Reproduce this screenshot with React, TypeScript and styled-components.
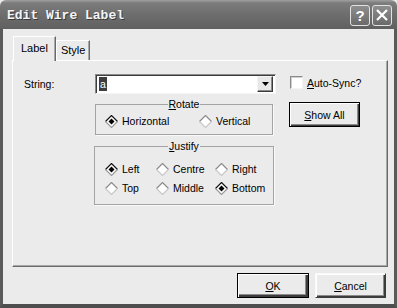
import { FC, ReactNode } from "react";
import styled, { createGlobalStyle } from "styled-components";

const GlobalStyle = createGlobalStyle`
  html, body {
    margin: 0;
    padding: 0;
    background: #ebebeb;
  }
  * {
    box-sizing: border-box;
  }
`;

type RadioProps = { checked?: boolean; label: ReactNode };

const Diamond: FC<{ checked?: boolean }> = ({ checked }) => (
  <svg width="13" height="13" viewBox="0 0 13 13">
    <polygon points="6.5,0.5 12.5,6.5 6.5,12.5 0.5,6.5" fill="#fff" />
    <polyline
      points="0.5,6.5 6.5,0.5 12.5,6.5"
      fill="none"
      stroke={checked ? "#111" : "#8a8a8a"}
      strokeWidth="1.2"
    />
    <polyline
      points="0.5,6.5 6.5,12.5 12.5,6.5"
      fill="none"
      stroke={checked ? "#9a9a9a" : "#c8c8c8"}
      strokeWidth="1.2"
    />
    {checked && <polygon points="6.5,3.5 9.5,6.5 6.5,9.5 3.5,6.5" fill="#000" />}
  </svg>
);

const Radio: FC<RadioProps> = ({ checked, label }) => (
  <StRadio>
    <Diamond checked={checked} />
    <span>{label}</span>
  </StRadio>
);

export default function App() {
  return (
    <>
      <GlobalStyle />
      <StWindow>
        <StTitleBar>
          <StTitle>Edit Wire Label</StTitle>
          <StCaptionButtons>
            <StCaptionButton>?</StCaptionButton>
            <StCaptionButton>
              <svg width="14" height="14" viewBox="0 0 14 14">
                <path d="M2 2 L12 12 M12 2 L2 12" stroke="#fff" strokeWidth="2.2" />
              </svg>
            </StCaptionButton>
          </StCaptionButtons>
        </StTitleBar>
        <StBody>
          <StTabs>
            <StTab $active>Label</StTab>
            <StTab>Style</StTab>
          </StTabs>
          <StPanel>
            <StFieldLabel>String:</StFieldLabel>
            <StCombo>
              <StComboText>
                <StSelection>a</StSelection>
              </StComboText>
              <StComboArrow>
                <svg width="7" height="4" viewBox="0 0 7 4">
                  <polygon points="0,0 7,0 3.5,4" fill="#000" />
                </svg>
              </StComboArrow>
            </StCombo>
            <StCheckRow>
              <StCheckBox />
              <span>
                <u>A</u>uto-Sync?
              </span>
            </StCheckRow>

            <StGroup $width={178} $top={4}>
              <StLegend>
                <u>R</u>otate
              </StLegend>
              <StRadioGrid $cols="94px 1fr" $pad="4px 0 6px 9px">
                <Radio checked label="Horizontal" />
                <Radio label="Vertical" />
              </StRadioGrid>
            </StGroup>
            <StSideButton>
              <StButton $focus>
                <u>S</u>how All
              </StButton>
            </StSideButton>

            <StGroup $width={180} $top={5} $shift={-1}>
              <StLegend>
                <u>J</u>ustify
              </StLegend>
              <StRadioGrid $cols="51px 59px 1fr" $pad="10px 0 9px 10px">
                <Radio checked label="Left" />
                <Radio label="Centre" />
                <Radio label="Right" />
                <Radio label="Top" />
                <Radio label="Middle" />
                <Radio checked label="Bottom" />
              </StRadioGrid>
            </StGroup>
          </StPanel>
          <StFooter>
            <StButton $default $width={72}>
              <u>O</u>K
            </StButton>
            <StButton $width={71}>
              <u>C</u>ancel
            </StButton>
          </StFooter>
        </StBody>
      </StWindow>
    </>
  );
}

const StWindow = styled.div`
  width: 397px;
  height: 308px;
  display: flex;
  flex-direction: column;
  font-family: "Liberation Sans", Arial, sans-serif;
  font-size: 10.5px;
  color: #000;
  overflow: hidden;
`;

const StTitleBar = styled.div`
  height: 29px;
  flex: none;
  display: flex;
  align-items: center;
  justify-content: space-between;
  padding: 0 5px 0 7px;
  background: linear-gradient(#a0a0a0 0px, #7c7c7c 3px, #6e6e6e 14px, #606060 29px);
  border-radius: 6px 6px 0 0;
`;

const StTitle = styled.div`
  font-family: "Liberation Mono", "Courier New", monospace;
  font-weight: 700;
  font-size: 13px;
  color: #f4f4f4;
  text-shadow: 1px 1px 0 #3a3a3a;
  padding-top: 1px;
`;

const StCaptionButtons = styled.div`
  display: flex;
  gap: 2px;
  margin-top: 1px;
`;

const StCaptionButton = styled.div`
  width: 20px;
  height: 21px;
  display: flex;
  align-items: center;
  justify-content: center;
  border: 1px solid #e2e2e2;
  border-radius: 3px;
  background: linear-gradient(#8e8e8e, #6a6a6a);
  color: #fff;
  font-family: "Liberation Sans", Arial, sans-serif;
  font-weight: 700;
  font-size: 15px;
`;

const StBody = styled.div`
  flex: 1;
  display: flex;
  flex-direction: column;
  background: #ebebeb;
  border-left: 3px solid #5a5a5a;
  border-right: 3px solid #5a5a5a;
  border-bottom: 4px solid #4e4e4e;
  padding: 7px 5px 0 9px;
`;

const StTabs = styled.div`
  display: flex;
  align-items: flex-end;
  height: 24px;
  padding-left: 1px;
  position: relative;
  z-index: 1;
`;

const StTab = styled.div<{ $active?: boolean }>`
  height: ${(p) => (p.$active ? 25 : 20)}px;
  margin-bottom: ${(p) => (p.$active ? -1 : 0)}px;
  padding: 0 ${(p) => (p.$active ? 7 : 4)}px;
  padding-top: ${(p) => (p.$active ? 5 : 3)}px;
  background: #ebebeb;
  border-top: 1px solid #fff;
  border-left: 1px solid #fff;
  border-right: 1px solid #6a6a6a;
  box-shadow: inset -1px 0 0 #a8a8a8;
  font-size: 11px;
`;

const StPanel = styled.div`
  width: 376px;
  height: 207px;
  display: grid;
  grid-template-columns: 71px 181px 1fr;
  grid-template-rows: 20px auto auto;
  align-content: start;
  padding: 13px 0 0 11px;
  border-top: 1px solid #fff;
  border-left: 1px solid #fff;
  border-right: 1px solid #6a6a6a;
  border-bottom: 1px solid #6a6a6a;
  box-shadow: inset -1px -1px 0 #a8a8a8;
`;

const StFieldLabel = styled.div`
  align-self: center;
`;

const StCombo = styled.div`
  display: flex;
  align-items: center;
  background: #fff;
  border-top: 1px solid #8a8a8a;
  border-left: 1px solid #8a8a8a;
  border-right: 1px solid #f6f6f6;
  border-bottom: 1px solid #f6f6f6;
  box-shadow: inset 1px 1px 0 #3c3c3c;
  padding: 2px;
`;

const StComboText = styled.div`
  flex: 1;
  padding-left: 1px;
`;

const StSelection = styled.span`
  display: inline-block;
  background: #3d3d3d;
  color: #fff;
  line-height: 14px;
  padding: 0 1px;
`;

const StComboArrow = styled.div`
  width: 16px;
  height: 16px;
  display: flex;
  align-items: center;
  justify-content: center;
  background: #e8e8e8;
  border-top: 1px solid #f4f4f4;
  border-left: 1px solid #f4f4f4;
  border-right: 1px solid #3c3c3c;
  border-bottom: 1px solid #3c3c3c;
  box-shadow: inset -1px -1px 0 #8a8a8a;
`;

const StCheckRow = styled.div`
  display: flex;
  align-items: center;
  gap: 4px;
  padding-left: 14px;
  margin-top: 2px;
  align-self: start;
`;

const StCheckBox = styled.div`
  width: 13px;
  height: 13px;
  background: #fff;
  border-top: 1px solid #8a8a8a;
  border-left: 1px solid #8a8a8a;
  border-right: 1px solid #f4f4f4;
  border-bottom: 1px solid #f4f4f4;
  box-shadow: inset 1px 1px 0 #cfcfcf;
`;

const StGroup = styled.fieldset<{ $width: number; $top: number; $shift?: number }>`
  grid-column: 2;
  width: ${(p) => p.$width}px;
  margin: ${(p) => p.$top}px 0 0 ${(p) => p.$shift ?? 0}px;
  padding: 0;
  min-width: 0;
  border: 1px solid #a4a4a4;
  box-shadow: 1px 1px 0 #fafafa;
`;

const StLegend = styled.legend`
  margin: 0 auto;
  padding: 0 1px;
  line-height: 12px;
`;

const StRadioGrid = styled.div<{ $cols: string; $pad: string }>`
  display: grid;
  grid-template-columns: ${(p) => p.$cols};
  row-gap: 5px;
  padding: ${(p) => p.$pad};
`;

const StRadio = styled.div`
  display: flex;
  align-items: center;
  gap: 4px;
  height: 14px;
`;

const StSideButton = styled.div`
  padding: 8px 0 0 13px;
`;

const StButton = styled.div<{ $default?: boolean; $focus?: boolean; $width?: number }>`
  width: ${(p) => p.$width ?? 71}px;
  height: 25px;
  display: flex;
  align-items: center;
  justify-content: center;
  background: #ebebeb;
  border: 1px solid;
  border-color: ${(p) =>
    p.$default || p.$focus ? "#000" : "#fafafa #3c3c3c #3c3c3c #fafafa"};
  box-shadow: ${(p) =>
    p.$default
      ? "inset 1px 1px 0 #fff, inset -2px -2px 0 #3c3c3c, inset -3px -3px 0 #8a8a8a"
      : "inset 1px 1px 0 #fff, inset -1px -1px 0 #3c3c3c, inset -2px -2px 0 #8a8a8a"};
`;

const StFooter = styled.div`
  display: flex;
  justify-content: flex-end;
  gap: 6px;
  padding: 6px 3px 0 0;
`;
